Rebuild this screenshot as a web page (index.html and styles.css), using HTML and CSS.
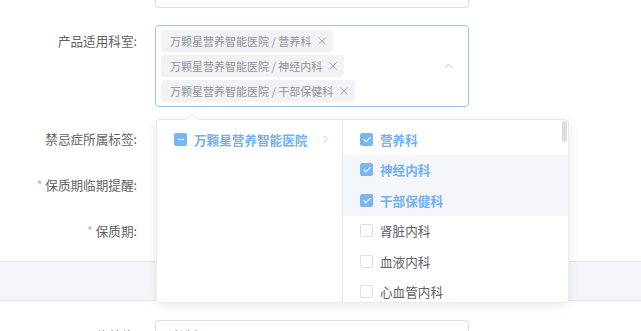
FILE: index.html
```html
<!DOCTYPE html>
<html lang="zh-CN">
<head>
  <meta charset="UTF-8" />
  <meta name="viewport" content="width=device-width, initial-scale=1.0" />
  <title>产品编辑</title>
  <link rel="stylesheet" href="styles.css">
</head>
<body>
  <div class="form">
    <div class="form-item first">
      <label class="form-label"></label>
      <div class="input"></div>
    </div>

    <div class="form-item multi-row">
      <label class="form-label">产品适用科室:</label>
      <div class="multi-select">
        <div class="tags">
          <span class="tag">万颗星营养智能医院 / 营养科<svg class="tag-close" viewBox="0 0 8 8"><path d="M0.5 0.5L7.5 7.5M7.5 0.5L0.5 7.5"/></svg></span>
          <span class="tag">万颗星营养智能医院 / 神经内科<svg class="tag-close" viewBox="0 0 8 8"><path d="M0.5 0.5L7.5 7.5M7.5 0.5L0.5 7.5"/></svg></span>
          <span class="tag">万颗星营养智能医院 / 干部保健科<svg class="tag-close" viewBox="0 0 8 8"><path d="M0.5 0.5L7.5 7.5M7.5 0.5L0.5 7.5"/></svg></span>
        </div>
        <svg class="caret" viewBox="0 0 10 6"><path d="M0.5 5.5L5 1L9.5 5.5"/></svg>
      </div>
    </div>

    <div class="form-item">
      <label class="form-label">禁忌症所属标签:</label>
    </div>
    <div class="form-item">
      <label class="form-label"><span class="req">*</span> 保质期临期提醒:</label>
    </div>
    <div class="form-item last">
      <label class="form-label"><span class="req">*</span> 保质期:</label>
    </div>
  </div>

  <div class="band"></div>

  <div class="form">
    <div class="form-item">
      <label class="form-label"><span class="req">*</span> 入住单位:</label>
      <div class="input"><span class="input-text">请选择</span></div>
    </div>
  </div>

  <div class="cascader-panel">
    <span class="popper-arrow"></span>
    <div class="cascader-menu left-menu">
      <div class="node active">
        <span class="checkbox indeterminate"></span>
        <span class="node-label">万颗星营养智能医院</span>
        <svg class="node-arrow" viewBox="0 0 6 10"><path d="M0.5 0.5L5 5L0.5 9.5"/></svg>
      </div>
    </div>
    <div class="cascader-menu right-menu">
      <div class="node active">
        <span class="checkbox checked"></span>
        <span class="node-label">营养科</span>
      </div>
      <div class="node active hover">
        <span class="checkbox checked"></span>
        <span class="node-label">神经内科</span>
      </div>
      <div class="node active hover">
        <span class="checkbox checked"></span>
        <span class="node-label">干部保健科</span>
      </div>
      <div class="node">
        <span class="checkbox"></span>
        <span class="node-label">肾脏内科</span>
      </div>
      <div class="node">
        <span class="checkbox"></span>
        <span class="node-label">血液内科</span>
      </div>
      <div class="node">
        <span class="checkbox"></span>
        <span class="node-label">心血管内科</span>
      </div>
      <span class="scroll-thumb"></span>
    </div>
  </div>
</body>
</html>
```

FILE: styles.css
```css
body {
  margin: 0;
  font-family: "Noto Sans CJK SC", "Noto Sans", sans-serif;
  background-color: #ffffff;
  color: #606266;
  height: 331px;
  overflow: hidden;
  position: relative;
}
.form {
  display: flex;
  flex-direction: column;
}
.form-item {
  display: flex;
  align-items: flex-start;
  min-height: 32px;
  margin-bottom: 14px;
}
.form-item.first {
  margin-top: -24px;
  margin-bottom: 17px;
}
.form-item.multi-row {
  margin-bottom: 16px;
}
.form-label {
  width: 155px;
  box-sizing: border-box;
  padding-right: 18px;
  text-align: right;
  font-size: 12.6px;
  line-height: 32px;
  color: #606266;
  flex-shrink: 0;
}
.req {
  color: #f59a9a;
}
.input {
  width: 314px;
  height: 32px;
  box-sizing: border-box;
  border: 1px solid #dcdfe6;
  border-radius: 4px;
  padding: 0 12px;
  font-size: 12.6px;
  line-height: 30px;
}
.input-text {
  color: #606266;
}
.multi-select {
  width: 314px;
  box-sizing: border-box;
  border: 1px solid #9fc3de;
  border-radius: 4px;
  padding: 4px 5px;
  display: flex;
  align-items: center;
}
.tags {
  flex: 1;
  display: flex;
  flex-direction: column;
  align-items: flex-start;
  gap: 3px;
}
.tag {
  display: flex;
  align-items: center;
  height: 22px;
  padding: 0 7px 0 9px;
  background-color: #f0f2f5;
  border-radius: 4px;
  color: #909399;
  font-size: 11px;
  white-space: nowrap;
}
.tag-close {
  width: 8px;
  height: 8px;
  margin-left: 7px;
  fill: none;
  stroke: #a2a5aa;
  stroke-width: 0.9;
}
.caret {
  width: 9px;
  height: 6px;
  margin-right: 10px;
  fill: none;
  stroke: #b4b7bd;
  stroke-width: 1;
}
.band {
  height: 40px;
  box-sizing: border-box;
  background-color: #f5f6fa;
  border-top: 1px solid #e4e7ed;
  border-bottom: 1px solid #e4e7ed;
  margin-bottom: 19px;
}
.cascader-panel {
  position: absolute;
  left: 156px;
  top: 119px;
  width: 413px;
  height: 184px;
  box-sizing: border-box;
  background-color: #ffffff;
  border: 1px solid #e9ebef;
  border-radius: 4px;
  box-shadow: 0 2px 12px rgba(0, 0, 0, 0.09);
  display: flex;
}
.popper-arrow {
  position: absolute;
  left: 31px;
  top: -5px;
  width: 8px;
  height: 8px;
  background-color: #ffffff;
  border-top: 1px solid #e9ebef;
  border-left: 1px solid #e9ebef;
  transform: rotate(45deg);
}
.cascader-menu {
  position: relative;
  padding-top: 4px;
  overflow: hidden;
}
.left-menu {
  width: 185px;
  border-right: 1px solid #e4e7ed;
}
.right-menu {
  flex: 1;
}
.node {
  display: flex;
  align-items: center;
  height: 30.5px;
  padding-left: 17px;
  font-size: 12.6px;
  color: #606266;
}
.node.hover {
  background-color: #f4f6fa;
}
.node.active .node-label {
  color: #72b0f3;
  font-weight: bold;
}
.node-label {
  margin-left: 7px;
  flex: 1;
}
.node-arrow {
  width: 5px;
  height: 9px;
  margin-right: 14px;
  fill: none;
  stroke: #a8c8ee;
  stroke-width: 1;
}
.checkbox {
  width: 13px;
  height: 13px;
  box-sizing: border-box;
  border: 1px solid #dcdfe6;
  border-radius: 2px;
  position: relative;
  flex-shrink: 0;
}
.checkbox.checked,
.checkbox.indeterminate {
  background-color: #7ab5f3;
  border-color: #7ab5f3;
}
.checkbox.checked::after {
  content: "";
  position: absolute;
  left: 3.5px;
  top: 1px;
  width: 3px;
  height: 6px;
  border-right: 1px solid #ffffff;
  border-bottom: 1px solid #ffffff;
  transform: rotate(45deg);
}
.checkbox.indeterminate::after {
  content: "";
  position: absolute;
  left: 2.5px;
  top: 5px;
  width: 6px;
  height: 1px;
  background-color: #ffffff;
}
.scroll-thumb {
  position: absolute;
  right: 1px;
  top: 1px;
  width: 5px;
  height: 21px;
  border-radius: 3px;
  background-color: #dcdde0;
}
```
